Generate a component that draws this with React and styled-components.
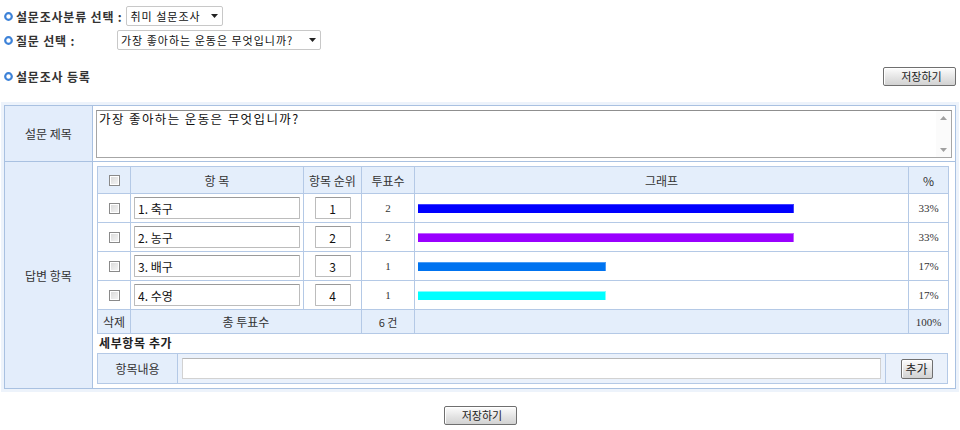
import React from "react";
import styled, { createGlobalStyle } from "styled-components";

const GlobalStyle = createGlobalStyle`
    body {
        margin: 0;
        background: #ffffff;
        font-family: "Noto Sans CJK KR", "Noto Sans", sans-serif;
        font-size: 12px;
        color: #333333;
    }
`;

const answers = [
    {name: "1. 축구", rank: 1, votes: 2, percent: 33, color: "#0000ff", edge: "#4040ff"},
    {name: "2. 농구", rank: 2, votes: 2, percent: 33, color: "#9900ff", edge: "#c060ff"},
    {name: "3. 배구", rank: 3, votes: 1, percent: 17, color: "#0073f0", edge: "#4a9cf5"},
    {name: "4. 수영", rank: 4, votes: 1, percent: 17, color: "#00ffff", edge: "#80ffff"},
];

const Bullet = () => (
    <BulletMark width="9" height="9" viewBox="0 0 9 9">
        <circle cx="4.5" cy="4.5" r="3.3" fill="#ffffff" stroke="#3d82d8" strokeWidth="2.2" />
    </BulletMark>
);

const Caret = () => (
    <CaretMark width="7" height="4" viewBox="0 0 7 4">
        <path d="M0 0 L7 0 L3.5 4 Z" fill="#222222" />
    </CaretMark>
);

const App = () => {
    const totalVotes = answers.reduce((sum, a) => sum + a.votes, 0);

    return (
        <Page>
            <GlobalStyle />
            <TopRow>
                <Bullet />
                <Label>설문조사분류 선택 :</Label>
                <SelectWrap width={97}>
                    <Select defaultValue="hobby">
                        <option value="hobby">취미 설문조사</option>
                    </Select>
                    <Caret />
                </SelectWrap>
            </TopRow>
            <TopRow second>
                <Bullet />
                <Label wide>질문 선택 :</Label>
                <SelectWrap width={204}>
                    <Select defaultValue="sport">
                        <option value="sport">가장 좋아하는 운동은 무엇입니까?</option>
                    </Select>
                    <Caret />
                </SelectWrap>
            </TopRow>
            <SectionHead>
                <SectionTitle>
                    <Bullet />
                    <Label>설문조사 등록</Label>
                </SectionTitle>
                <Button>저장하기</Button>
            </SectionHead>

            <Frame>
                <FormTable>
                    <colgroup>
                        <col style={{width: 88}} />
                        <col />
                    </colgroup>
                    <tbody>
                        <tr>
                            <HeadCell>설문 제목</HeadCell>
                            <MemoCell>
                                <MemoWrap>
                                    <Memo defaultValue="가장 좋아하는 운동은 무엇입니까?" />
                                    <ScrollRail>
                                        <svg width="7" height="4" viewBox="0 0 7 4">
                                            <path d="M0 4 L7 4 L3.5 0 Z" fill="#a0a0a0" />
                                        </svg>
                                        <svg width="7" height="4" viewBox="0 0 7 4">
                                            <path d="M0 0 L7 0 L3.5 4 Z" fill="#a0a0a0" />
                                        </svg>
                                    </ScrollRail>
                                </MemoWrap>
                            </MemoCell>
                        </tr>
                        <tr>
                            <HeadCell>답변 항목</HeadCell>
                            <ContentCell>
                                <ItemTable>
                                    <colgroup>
                                        <col style={{width: 33}} />
                                        <col style={{width: 173}} />
                                        <col style={{width: 58}} />
                                        <col style={{width: 53}} />
                                        <col style={{width: 494}} />
                                        <col style={{width: 40}} />
                                    </colgroup>
                                    <thead>
                                        <tr>
                                            <Th><Check type="checkbox" /></Th>
                                            <Th>항 목</Th>
                                            <Th>항목 순위</Th>
                                            <Th>투표수</Th>
                                            <Th>그래프</Th>
                                            <Th>%</Th>
                                        </tr>
                                    </thead>
                                    <tbody>
                                        {answers.map(a => (
                                            <tr key={a.rank}>
                                                <Td><Check type="checkbox" /></Td>
                                                <Td><ItemField defaultValue={a.name} /></Td>
                                                <Td><RankField defaultValue={a.rank} /></Td>
                                                <Td serif>{a.votes}</Td>
                                                <GraphCell>
                                                    <Bar
                                                        color={a.color}
                                                        edge={a.edge}
                                                        style={{width: Math.round(a.votes / totalVotes * 1128)}}
                                                    />
                                                </GraphCell>
                                                <Td serif>{a.percent}%</Td>
                                            </tr>
                                        ))}
                                        <FootRow>
                                            <Td>삭제</Td>
                                            <Td colSpan={2}>총 투표수</Td>
                                            <Td small>{totalVotes} 건</Td>
                                            <Td />
                                            <Td serif>100%</Td>
                                        </FootRow>
                                    </tbody>
                                </ItemTable>
                                <SubTitle>세부항목 추가</SubTitle>
                                <AddTable>
                                    <colgroup>
                                        <col style={{width: 80}} />
                                        <col />
                                        <col style={{width: 62}} />
                                    </colgroup>
                                    <tbody>
                                        <tr>
                                            <AddLabel>항목내용</AddLabel>
                                            <AddCell><AddField /></AddCell>
                                            <AddCell center><SmallButton>추가</SmallButton></AddCell>
                                        </tr>
                                    </tbody>
                                </AddTable>
                            </ContentCell>
                        </tr>
                    </tbody>
                </FormTable>
            </Frame>

            <BottomBar>
                <Button>저장하기</Button>
            </BottomBar>
        </Page>
    );
};

const Page = styled.div`
    width: 960px;
    height: 430px;
    padding-top: 6px;
    box-sizing: border-box;
    overflow: hidden;
`;

const TopRow = styled.div`
    display: flex;
    align-items: center;
    height: 20px;
    padding-left: 4px;
    margin-top: ${props => props.second ? "4px" : "0"};
`;

const BulletMark = styled.svg`
    flex: none;
    margin-right: 3px;
`;

const Label = styled.span`
    font-weight: bold;
    font-size: 12px;
    letter-spacing: 0.8px;
    color: #333333;
    white-space: nowrap;
    width: ${props => props.wide ? "97px" : "auto"};
    margin-right: 4px;
`;

const SelectWrap = styled.span`
    position: relative;
    display: inline-block;
    width: ${props => props.width}px;
    height: 20px;
`;

const Select = styled.select`
    appearance: none;
    width: 100%;
    height: 100%;
    box-sizing: border-box;
    border: 1px solid #c8c8c8;
    border-radius: 2px;
    background: #ffffff;
    padding: 0 16px 0 3px;
    font-family: "Noto Sans CJK KR", sans-serif;
    font-size: 11px;
    letter-spacing: 1px;
    color: #111111;
    outline: none;
`;

const CaretMark = styled.svg`
    position: absolute;
    right: 5px;
    top: 8px;
    pointer-events: none;
`;

const SectionHead = styled.div`
    display: flex;
    align-items: center;
    justify-content: space-between;
    height: 20px;
    margin-top: 16px;
    padding: 0 4px 0 4px;
`;

const SectionTitle = styled.div`
    display: flex;
    align-items: center;
`;

const Button = styled.button`
    width: 73px;
    height: 19px;
    padding: 0 0 0 4px;
    border: 1px solid #6f6f6f;
    border-radius: 2px;
    background: linear-gradient(#fdfdfd, #e4e4e4 55%, #d2d2d2);
    box-shadow: inset 1px 1px 0 #ffffff;
    font-family: "Noto Sans CJK KR", sans-serif;
    font-size: 11px;
    line-height: 15px;
    color: #222222;
`;

const SmallButton = styled(Button)`
    width: 32px;
    height: 20px;
    padding: 0;
    font-size: 12px;
`;

const Frame = styled.div`
    margin: 16px 1px 0 1px;
    border: 3px solid #edf3fb;
`;

const FormTable = styled.table`
    width: 100%;
    border-collapse: collapse;
    table-layout: fixed;
    border: 1px solid #a9c1e1;
`;

const HeadCell = styled.td`
    background: #e3edfb;
    border: 1px solid #a9c1e1;
    text-align: center;
    font-size: 12px;
    color: #333333;
`;

const MemoCell = styled.td`
    border: 1px solid #a9c1e1;
    padding: 4px 3px 3px 3px;
    background: #ffffff;
    line-height: 0;
`;

const MemoWrap = styled.div`
    position: relative;
`;

const Memo = styled.textarea`
    display: block;
    width: 100%;
    height: 48px;
    box-sizing: border-box;
    border: 1px solid #a6a6a6;
    border-top-color: #8f8f8f;
    resize: none;
    overflow: hidden;
    padding: 0 20px 0 2px;
    font-family: "Noto Sans CJK KR", sans-serif;
    font-size: 12.5px;
    letter-spacing: 1.4px;
    line-height: 16px;
    color: #111111;
    outline: none;
`;

const ScrollRail = styled.div`
    position: absolute;
    top: 1px;
    right: 1px;
    bottom: 1px;
    width: 15px;
    display: flex;
    flex-direction: column;
    justify-content: space-between;
    align-items: center;
    padding: 5px 0;
    box-sizing: border-box;
    background: #fbfbfb;
`;

const ContentCell = styled.td`
    border: 1px solid #a9c1e1;
    padding: 4px 7px 4px 4px;
    background: #ffffff;
    vertical-align: top;
`;

const ItemTable = styled.table`
    width: 851px;
    border-collapse: collapse;
    table-layout: fixed;
`;

const Th = styled.th`
    height: 26px;
    padding: 0;
    background: #e4eefb;
    border: 1px solid #b4c9e6;
    font-weight: normal;
    font-size: 12px;
    color: #333333;
    text-align: center;
`;

const Td = styled.td`
    height: 28px;
    padding: 0;
    border: 1px solid #b4c9e6;
    text-align: center;
    font-family: ${props => props.serif ? '"Liberation Serif", serif' : '"Noto Sans CJK KR", sans-serif'};
    font-size: ${props => props.serif || props.small ? "11px" : "12px"};
    color: #333333;
`;

const GraphCell = styled(Td)`
    text-align: left;
    padding-left: 3px;
`;

const FootRow = styled.tr`
    background: #e4eefb;

    td {
        height: 23px;
    }
`;

const Check = styled.input`
    appearance: none;
    display: block;
    margin: 0 auto;
    width: 11px;
    height: 11px;
    border: 1px solid #8a8a8a;
    background: linear-gradient(135deg, #d8d8d8, #f6f6f6);
    box-shadow: inset 0 0 0 1px #ffffff;
`;

const ItemField = styled.input`
    display: block;
    width: 166px;
    height: 22px;
    margin-left: 3px;
    box-sizing: border-box;
    border: 1px solid #bcbcbc;
    border-top-color: #9a9a9a;
    border-radius: 1px;
    padding: 0 3px;
    font-family: "Noto Sans CJK KR", sans-serif;
    font-size: 12px;
    color: #111111;
    outline: none;
`;

const RankField = styled(ItemField)`
    width: 36px;
    margin: 0 auto;
    text-align: center;
`;

const Bar = styled.div`
    height: 9px;
    background: ${props => props.color};
    border-top: 1px solid ${props => props.edge};
    border-right: 1px solid ${props => props.edge};
    box-sizing: border-box;
`;

const SubTitle = styled.div`
    height: 18px;
    line-height: 18px;
    font-weight: bold;
    font-size: 12px;
    letter-spacing: 0.6px;
    color: #222222;
    padding-left: 2px;
    margin-bottom: 1px;
`;

const AddTable = styled.table`
    width: 851px;
    border-collapse: collapse;
    table-layout: fixed;
`;

const AddLabel = styled.td`
    height: 29px;
    padding: 0;
    border: 1px solid #b4c9e6;
    background: #e4eefb;
    text-align: center;
    font-size: 12px;
    color: #333333;
`;

const AddCell = styled.td`
    padding: 0 4px;
    border: 1px solid #b4c9e6;
    background: #eaf1fb;
    text-align: ${props => props.center ? "center" : "left"};
`;

const AddField = styled.input`
    display: block;
    width: 100%;
    height: 21px;
    box-sizing: border-box;
    border: 1px solid #d2d2d2;
    border-top-color: #b6b6b6;
    background: #ffffff;
    outline: none;
`;

const BottomBar = styled.div`
    display: flex;
    justify-content: center;
    margin-top: 14px;
`;

export default App;
